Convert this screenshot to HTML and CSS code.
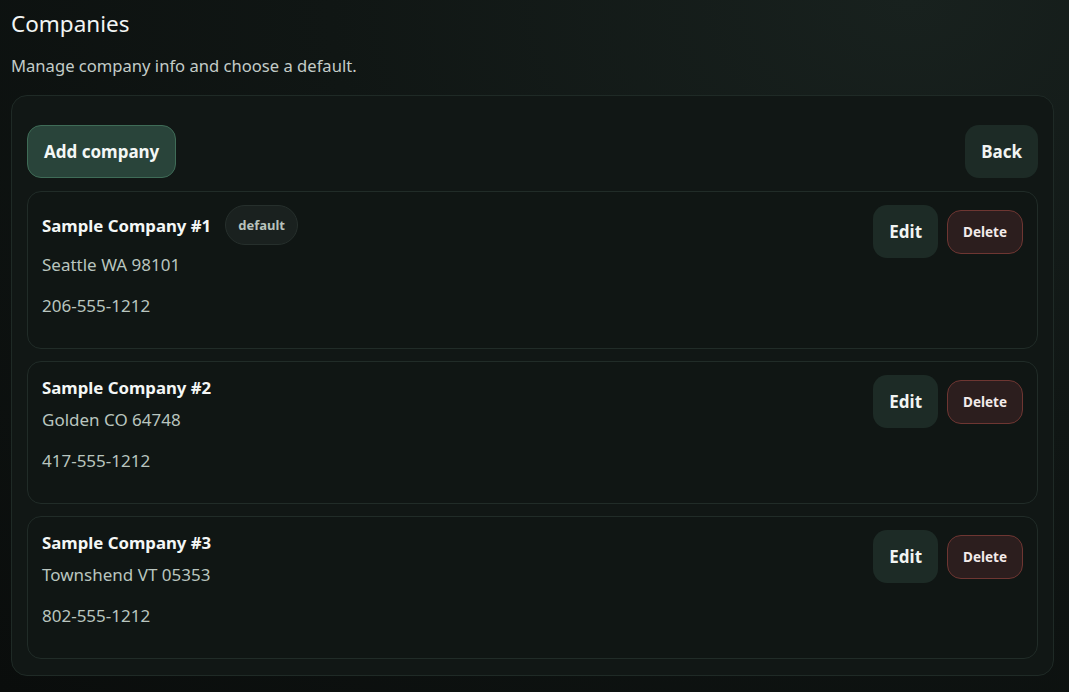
FILE: index.html
```html
<!DOCTYPE html>
<html lang="en">
<head>
<meta charset="utf-8">
<title>Companies</title>
<link rel="stylesheet" href="styles.css">
</head>
<body>
<main class="page">
  <h1 class="title">Companies</h1>
  <p class="subtitle">Manage company info and choose a default.</p>
  <section class="panel">
    <div class="toolbar">
      <button class="btn btn-primary">Add company</button>
      <button class="btn btn-ghost">Back</button>
    </div>
    <div class="list">
      <article class="company">
        <div class="info">
          <div class="name-row">
            <span class="name">Sample Company #1</span>
            <span class="badge">default</span>
          </div>
          <p class="addr">Seattle WA 98101</p>
          <p class="phone">206-555-1212</p>
        </div>
        <div class="actions">
          <button class="btn btn-ghost">Edit</button>
          <button class="btn btn-danger">Delete</button>
        </div>
      </article>
      <article class="company">
        <div class="info">
          <div class="name-row">
            <span class="name">Sample Company #2</span>
          </div>
          <p class="addr">Golden CO 64748</p>
          <p class="phone">417-555-1212</p>
        </div>
        <div class="actions">
          <button class="btn btn-ghost">Edit</button>
          <button class="btn btn-danger">Delete</button>
        </div>
      </article>
      <article class="company">
        <div class="info">
          <div class="name-row">
            <span class="name">Sample Company #3</span>
          </div>
          <p class="addr">Townshend VT 05353</p>
          <p class="phone">802-555-1212</p>
        </div>
        <div class="actions">
          <button class="btn btn-ghost">Edit</button>
          <button class="btn btn-danger">Delete</button>
        </div>
      </article>
    </div>
  </section>
</main>
</body>
</html>
```
FILE: styles.css
```css
* { box-sizing: border-box; }
html, body { height: 100%; }
body {
  margin: 0;
  background: radial-gradient(ellipse at 85% 0%, #18211e 0%, #101614 45%, #0a0d0c 100%);
  color: #e9efec;
  font-family: "Segoe UI", "Noto Sans", "Open Sans", sans-serif;
}
.page {
  padding: 0 15px 0 11px;
}
.title {
  margin: 0;
  padding-top: 9px;
  font-size: 22.5px;
  font-weight: 400;
  line-height: 30px;
  color: #f2f5f4;
}
.subtitle {
  margin: 15px 0 0;
  font-size: 16.6px;
  line-height: 24px;
  color: #c3ccc8;
}
.panel {
  margin-top: 17px;
  background: #111715;
  border: 1px solid #1f2a26;
  border-radius: 16px;
  padding: 29px 15px 16px 15px;
}
.toolbar {
  display: flex;
  justify-content: space-between;
  align-items: center;
  margin-bottom: 13px;
}
.btn {
  font-family: inherit;
  font-weight: 700;
  border-radius: 14px;
  border: 1px solid transparent;
  cursor: pointer;
}
.btn-primary {
  height: 53px;
  padding: 0 16px;
  font-size: 17px;
  color: #f4f7f5;
  background: #29443a;
  border-color: #3f6c57;
}
.btn-ghost {
  height: 53px;
  padding: 0 15px;
  font-size: 17px;
  color: #f1f4f2;
  background: #1d2b26;
}
.btn-danger {
  height: 44px;
  padding: 0 15px;
  font-size: 13.5px;
  color: #f3ebea;
  background: #2c1e1e;
  border-color: #6e3632;
}
.list {
  display: flex;
  flex-direction: column;
  gap: 12px;
}
.company {
  display: flex;
  justify-content: space-between;
  align-items: flex-start;
  background: #101614;
  border: 1px solid #212c28;
  border-radius: 14px;
  padding: 13px 14px 14px 14px;
}
.info {
  display: flex;
  flex-direction: column;
}
.name-row {
  display: flex;
  align-items: center;
  gap: 14px;
  min-height: 25px;
}
.name {
  font-size: 16.8px;
  font-weight: 700;
  color: #f4f7f6;
  line-height: 25px;
}
.badge {
  display: inline-flex;
  align-items: center;
  height: 40px;
  padding: 0 12px;
  border-radius: 20px;
  background: #1a211f;
  border: 1px solid #262f2c;
  font-size: 13px;
  font-weight: 700;
  color: #b8c2bd;
}
.addr, .phone {
  margin: 0;
  font-size: 17px;
  line-height: 24px;
  color: #b9c5bf;
}
.addr { margin-top: 8px; }
.phone { margin-top: 17px; margin-bottom: 16px; }
.actions {
  display: flex;
  align-items: center;
  gap: 9px;
}
```
